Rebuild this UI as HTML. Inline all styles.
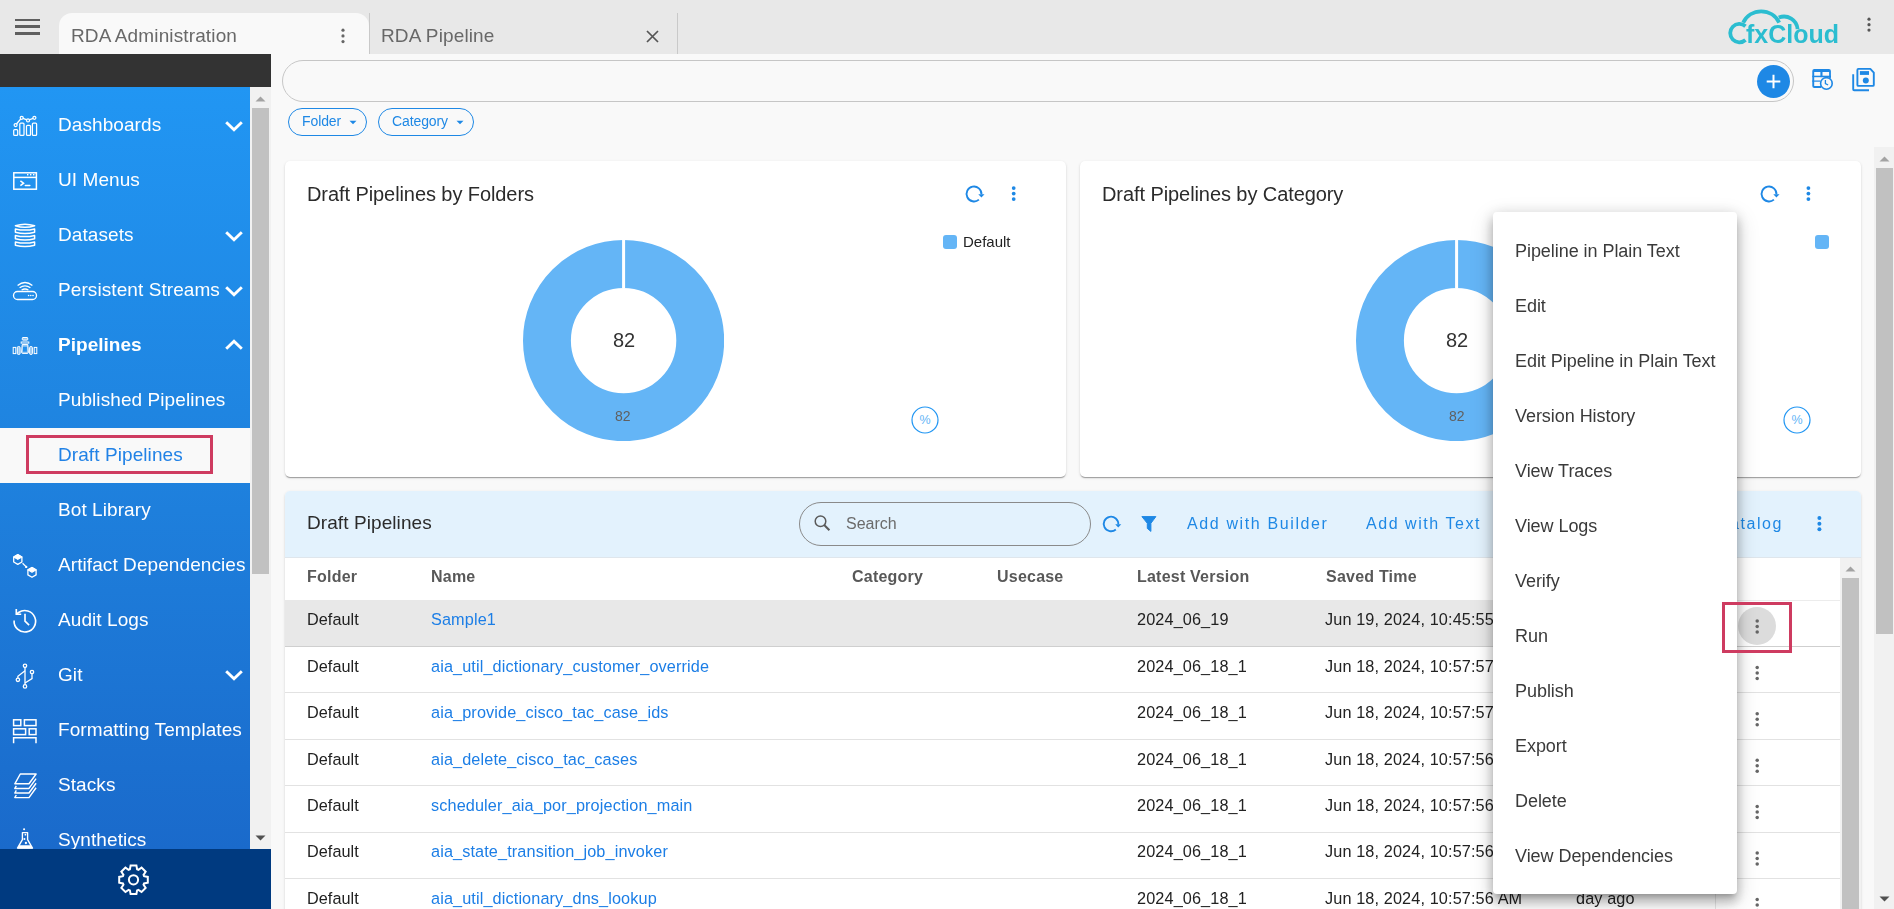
<!DOCTYPE html>
<html><head><meta charset="utf-8"><title>RDA Administration</title>
<style>
html,body{margin:0;padding:0;width:1894px;height:909px;overflow:hidden;background:#f9f9f9;font-family:"Liberation Sans", sans-serif;-webkit-font-smoothing:antialiased;}
.t{will-change:transform}
.t{position:absolute;white-space:nowrap;}
svg{display:block}
</style></head><body>
<div style="position:absolute;left:0.00px;top:0.00px;width:1894.00px;height:54.00px;background:#e8e8e8"></div>
<div style="position:absolute;left:271.00px;top:54.00px;width:1623.00px;height:855.00px;background:#f9f9f9"></div>
<div style="position:absolute;left:15.20px;top:18.60px;width:25.00px;height:2.60px;background:#5f5f5f"></div>
<div style="position:absolute;left:15.20px;top:25.40px;width:25.00px;height:2.60px;background:#5f5f5f"></div>
<div style="position:absolute;left:15.20px;top:32.20px;width:25.00px;height:2.60px;background:#5f5f5f"></div>
<div style="position:absolute;left:59.40px;top:12.80px;width:309.30px;height:41.20px;background:#f9f9f9;border-radius:13px 13px 0 0"></div>
<div class="t" style="left:71.30px;top:25.82px;font-size:19px;line-height:19px;color:#686868;font-weight:normal;letter-spacing:0.13px">RDA Administration</div>
<svg style="position:absolute;left:0;top:0;overflow:visible" width="1" height="1"><circle cx="343" cy="30.2" r="1.6" fill="#666"/><circle cx="343" cy="35.9" r="1.6" fill="#666"/><circle cx="343" cy="41.6" r="1.6" fill="#666"/></svg>
<div style="position:absolute;left:369.00px;top:13.00px;width:1.00px;height:41.00px;background:#c9c9c9"></div>
<div style="position:absolute;left:677.00px;top:13.00px;width:1.00px;height:41.00px;background:#c9c9c9"></div>
<div class="t" style="left:380.80px;top:25.82px;font-size:19px;line-height:19px;color:#686868;font-weight:normal;letter-spacing:0.13px">RDA Pipeline</div>
<svg style="position:absolute;left:646.00px;top:30.00px;" width="13" height="13" viewBox="0 0 13 13"><path d="M1 1L12 12M12 1L1 12" stroke="#555" stroke-width="1.7"/></svg>
<svg style="position:absolute;left:0;top:0;overflow:visible" width="1" height="1"><circle cx="1869" cy="19.2" r="1.6" fill="#555"/><circle cx="1869" cy="24.7" r="1.6" fill="#555"/><circle cx="1869" cy="30.1" r="1.6" fill="#555"/></svg>
<svg style="position:absolute;left:0;top:0;overflow:visible" width="1" height="1">
<path d="M1743.2 22.6 A 20 20 0 0 1 1779.2 22.6" fill="none" stroke="#2bbdd0" stroke-width="3.8"/>
<path d="M1778.8 17.6 A 13.6 13.6 0 0 1 1797.6 29.2" fill="none" stroke="#2bbdd0" stroke-width="3.8"/>
<path d="M1745.5 26.2 A 9.2 9.2 0 1 0 1745.5 40" fill="none" stroke="#2bbdd0" stroke-width="3.8"/>
<text x="1746" y="43.2" font-family="Liberation Sans" font-weight="bold" font-size="25.5" fill="#2bbdd0" textLength="93" lengthAdjust="spacingAndGlyphs">fxCloud</text>
</svg>
<div style="position:absolute;left:0.00px;top:54.00px;width:271.00px;height:33.00px;background:#333333"></div>
<div style="position:absolute;left:0.00px;top:87.00px;width:250.00px;height:762.00px;background:linear-gradient(180deg,#2196f3 0%,#1f84e0 45%,#1a6acb 100%)"></div>
<div style="position:absolute;left:250.00px;top:87.00px;width:21.00px;height:762.00px;background:#f1f1f1"></div>
<div style="position:absolute;left:252.00px;top:108.20px;width:17.00px;height:465.50px;background:#c1c1c1"></div>
<svg style="position:absolute;left:255.00px;top:95.00px;" width="11" height="7" viewBox="0 0 11 7"><path d="M0.5 6.5L5.5 1.5L10.5 6.5Z" fill="#a3a3a3"/></svg>
<svg style="position:absolute;left:255.00px;top:835.00px;" width="11" height="7" viewBox="0 0 11 7"><path d="M0.5 0.5L5.5 5.5L10.5 0.5Z" fill="#505050"/></svg>
<div style="position:absolute;left:0.00px;top:427.80px;width:250.00px;height:55.10px;background:#f9f9f9"></div>
<div style="position:absolute;left:26.10px;top:435.10px;width:186.80px;height:38.70px;border:3px solid #ce3b60;box-sizing:border-box"></div>
<div class="t" style="left:57.80px;top:115.42px;font-size:19px;line-height:19px;color:#fff;font-weight:normal;letter-spacing:0.08px">Dashboards</div>
<div class="t" style="left:57.80px;top:170.37px;font-size:19px;line-height:19px;color:#fff;font-weight:normal;letter-spacing:0.08px">UI Menus</div>
<div class="t" style="left:57.80px;top:225.32px;font-size:19px;line-height:19px;color:#fff;font-weight:normal;letter-spacing:0.08px">Datasets</div>
<div class="t" style="left:57.80px;top:280.27px;font-size:19px;line-height:19px;color:#fff;font-weight:normal;letter-spacing:0.08px">Persistent Streams</div>
<div class="t" style="left:57.90px;top:335.12px;font-size:19px;line-height:19px;color:#fff;font-weight:bold;letter-spacing:0.03px">Pipelines</div>
<div class="t" style="left:57.80px;top:390.17px;font-size:19px;line-height:19px;color:#fff;font-weight:normal;letter-spacing:0.08px">Published Pipelines</div>
<div class="t" style="left:57.80px;top:445.12px;font-size:19px;line-height:19px;color:#2182e6;font-weight:normal;letter-spacing:0.08px">Draft Pipelines</div>
<div class="t" style="left:57.80px;top:500.07px;font-size:19px;line-height:19px;color:#fff;font-weight:normal;letter-spacing:0.08px">Bot Library</div>
<div class="t" style="left:57.80px;top:555.02px;font-size:19px;line-height:19px;color:#fff;font-weight:normal;letter-spacing:0.08px">Artifact Dependencies</div>
<div class="t" style="left:57.80px;top:609.97px;font-size:19px;line-height:19px;color:#fff;font-weight:normal;letter-spacing:0.08px">Audit Logs</div>
<div class="t" style="left:57.80px;top:664.92px;font-size:19px;line-height:19px;color:#fff;font-weight:normal;letter-spacing:0.08px">Git</div>
<div class="t" style="left:57.80px;top:719.87px;font-size:19px;line-height:19px;color:#fff;font-weight:normal;letter-spacing:0.08px">Formatting Templates</div>
<div class="t" style="left:57.80px;top:774.82px;font-size:19px;line-height:19px;color:#fff;font-weight:normal;letter-spacing:0.08px">Stacks</div>
<div class="t" style="left:57.80px;top:829.77px;font-size:19px;line-height:19px;color:#fff;font-weight:normal;letter-spacing:0.08px">Synthetics</div>
<svg style="position:absolute;left:224.00px;top:118.90px;" width="20" height="14" viewBox="0 0 20 14"><path d="M2.2 3.2L10 10.8L17.8 3.2" fill="none" stroke="#fff" stroke-width="2.9"/></svg>
<svg style="position:absolute;left:224.00px;top:228.80px;" width="20" height="14" viewBox="0 0 20 14"><path d="M2.2 3.2L10 10.8L17.8 3.2" fill="none" stroke="#fff" stroke-width="2.9"/></svg>
<svg style="position:absolute;left:224.00px;top:283.75px;" width="20" height="14" viewBox="0 0 20 14"><path d="M2.2 3.2L10 10.8L17.8 3.2" fill="none" stroke="#fff" stroke-width="2.9"/></svg>
<svg style="position:absolute;left:224.00px;top:668.40px;" width="20" height="14" viewBox="0 0 20 14"><path d="M2.2 3.2L10 10.8L17.8 3.2" fill="none" stroke="#fff" stroke-width="2.9"/></svg>
<svg style="position:absolute;left:224.00px;top:338.20px;" width="20" height="14" viewBox="0 0 20 14"><path d="M2.2 10.8L10 3.2L17.8 10.8" fill="none" stroke="#fff" stroke-width="2.9"/></svg>
<div style="position:absolute;left:0.00px;top:848.80px;width:271.00px;height:61.00px;background:#003a80"></div>
<svg style="position:absolute;left:0;top:0;overflow:visible" width="1" height="1">
<g fill="none" stroke="#ffffff" stroke-width="1.25">
 <rect x="13.7" y="129.6" width="4" height="5.8" rx="1"/>
 <rect x="19.8" y="123.0" width="4.2" height="12.4" rx="1"/>
 <rect x="26.5" y="125.3" width="4" height="10.1" rx="1"/>
 <rect x="32.4" y="123.0" width="4.2" height="12.4" rx="1"/>
 <polyline points="15.6,125 21.7,117.8 28,120.4 34.4,117.8"/>
 <circle cx="15.6" cy="125" r="1.5" fill="#2196f3"/><circle cx="21.7" cy="117.8" r="1.5" fill="#2196f3"/>
 <circle cx="28" cy="120.4" r="1.5" fill="#2196f3"/><circle cx="34.4" cy="117.8" r="1.5" fill="#2196f3"/>
</g>
<g fill="none" stroke="#ffffff" stroke-width="1.5">
 <rect x="13.8" y="172.8" width="22.6" height="16.4"/>
 <line x1="13.8" y1="177.4" x2="36.4" y2="177.4"/>
 <polyline points="20.4,180.8 23.6,183.2 20.4,185.6" />
 <line x1="25.3" y1="185.6" x2="29.8" y2="185.6" stroke-linecap="round"/>
</g>
<g fill="#ffffff"><rect x="27" y="174" width="1.4" height="1.4"/><rect x="30" y="174" width="1.4" height="1.4"/><rect x="33" y="174" width="1.4" height="1.4"/></g>
<g fill="none" stroke="#ffffff" stroke-width="1.5" stroke-linejoin="round">
 <path d="M15.4 225.7 Q25 222.6 34.6 225.7 Q25 228.8 15.4 225.7 Z"/>
 <path d="M15.4 228.9 Q25 231.3 34.6 228.9 V232.3 Q25 234.7 15.4 232.3 Z"/>
 <path d="M15.4 235.4 Q25 237.8 34.6 235.4 V238.8 Q25 241.2 15.4 238.8 Z"/>
 <path d="M15.4 241.9 Q25 244.3 34.6 241.9 V245.3 Q25 247.7 15.4 245.3 Z"/>
</g>
<g fill="none" stroke="#ffffff" stroke-width="1.3">
 <rect x="13.5" y="291.5" width="23" height="8" rx="4"/>
 <path d="M17.6 285.5 Q25 279.5 32.4 285.5"/>
 <path d="M19.6 287.8 Q25 284 30.4 287.8"/>
 <path d="M21.6 290 Q25 288 28.4 290"/>
</g>
<g fill="#ffffff"><circle cx="28.6" cy="295.5" r="0.8"/><circle cx="30.8" cy="295.5" r="0.8"/><circle cx="33" cy="295.5" r="0.8"/></g>
<g stroke="#ffffff" stroke-width="1" fill="rgba(255,255,255,.5)">
 <rect x="22.3" y="337.5" width="5.4" height="2.6" rx="0.6"/>
 <rect x="21.4" y="341" width="7.2" height="3.2" rx="1" stroke="none"/>
 <path d="M21.2 341.5 v2.2 M28.8 341.5 v2.2" fill="none"/>
 <path d="M22.2 344.6 L21.6 352.2 Q21.6 353.4 22.8 353.4 L27.2 353.4 Q28.4 353.4 28.4 352.2 L27.8 344.6 Z"/>
 <rect x="23" y="346.8" width="3.9" height="4.9" fill="#2190ee" stroke="none"/>
 <rect x="17.3" y="346.5" width="2.8" height="8" rx="1.2"/>
 <rect x="29.6" y="346.5" width="2.8" height="8" rx="1.2"/>
 <rect x="13.2" y="347.4" width="2.6" height="6.2" fill="none"/>
 <rect x="34.2" y="347.4" width="2.6" height="6.2" fill="none"/>
</g>
<g transform="translate(0,0)">
 <path d="M17.8 554.6 L21.9 557 L21.9 562 L17.8 564.4 L13.7 562 L13.7 557 Z" fill="none" stroke="#ffffff" stroke-width="1.3" stroke-linejoin="round"/>
 <path d="M17.8 554.6 L21.9 557 L17.8 559.4 L13.7 557 Z" fill="#ffffff" stroke="#ffffff" stroke-width="1.1" stroke-linejoin="round"/>
</g><g transform="translate(14.2,12.9)">
 <path d="M17.8 554.6 L21.9 557 L21.9 562 L17.8 564.4 L13.7 562 L13.7 557 Z" fill="none" stroke="#ffffff" stroke-width="1.3" stroke-linejoin="round"/>
 <path d="M17.8 554.6 L21.9 557 L17.8 559.4 L13.7 557 Z" fill="#ffffff" stroke="#ffffff" stroke-width="1.1" stroke-linejoin="round"/>
</g>
<path d="M22.6 563.2 L26 566.6" stroke="#ffffff" stroke-width="1.3"/>
<circle cx="26.2" cy="566.9" r="1.2" fill="#ffffff"/>
<g fill="none" stroke="#ffffff" stroke-width="1.65">
 <path d="M14.1 620.5 A10.75 10.75 0 1 0 18.6 612.5 L16.3 614.2"/>
 <polyline points="16.3,609.1 16.3,614.2 21.2,614.2"/>
 <polyline points="25,613.7 25,621.2 29.1,625.1"/>
</g>
<g fill="none" stroke="#ffffff" stroke-width="1.3">
 <line x1="25" y1="667.5" x2="25" y2="684.7"/>
 <path d="M25 670.8 L17.9 676.3 L17.9 678.1"/>
 <path d="M25 683 L32 678.6 L32 673.7"/>
 <circle cx="25" cy="665.8" r="1.7"/><circle cx="25" cy="686.4" r="1.7"/>
 <circle cx="17.9" cy="679.8" r="1.7"/><circle cx="32" cy="672" r="1.7"/>
</g>
<g fill="none" stroke="#ffffff" stroke-width="1.5">
 <rect x="13.6" y="719.8" width="7.2" height="5.8"/>
 <rect x="24.4" y="719.8" width="11.6" height="5.8"/>
 <rect x="13.6" y="728.8" width="12" height="5.8"/>
 <rect x="29.2" y="728.8" width="6.8" height="5.8"/>
 <polyline points="13.6,743.3 13.6,737.8 36,737.8 36,743.3"/>
</g>
<g fill="none" stroke="#ffffff" stroke-width="1.45" stroke-linejoin="round">
 <path d="M20.3 774 L36.1 774 L29 783.8 L14.8 783.8 Z"/>
 <path d="M36.1 778.6 L29 788.4 L14.8 788.4 L16.3 785.8"/>
 <path d="M36.1 783.2 L29 793 L14.8 793 L16.3 790.4"/>
 <path d="M36.1 787.8 L29 797.6 L14.8 797.6 L16.3 795"/>
</g>
<path d="M22.4 832.6 H27.6 V839.6 L32.5 848.1 H17.5 L22.4 839.6 Z" fill="none" stroke="#ffffff" stroke-width="1.35" stroke-linejoin="round"/>
<path d="M19.2 845.3 H30.8 L32.5 848.4 H17.5 Z" fill="#ffffff"/>
<circle cx="24.1" cy="829.3" r="1.05" fill="#ffffff"/>
<circle cx="25.4" cy="834.7" r="0.85" fill="#ffffff"/><circle cx="24.4" cy="839" r="1.05" fill="#ffffff"/><circle cx="25.9" cy="843" r="1.15" fill="#ffffff"/>
</svg>
<svg style="position:absolute;left:0;top:0;overflow:visible" width="1" height="1"><path fill="none" stroke="#fff" stroke-width="2" stroke-linejoin="miter" d="M129.90 869.20 L130.60 865.50 L136.40 865.50 L137.10 869.20 A10.6 10.6 0 0 1 138.45 869.76 L141.56 867.64 L145.66 871.74 L143.54 874.85 A10.6 10.6 0 0 1 144.10 876.20 L147.80 876.90 L147.80 882.70 L144.10 883.40 A10.6 10.6 0 0 1 143.54 884.75 L145.66 887.86 L141.56 891.96 L138.45 889.84 A10.6 10.6 0 0 1 137.10 890.40 L136.40 894.10 L130.60 894.10 L129.90 890.40 A10.6 10.6 0 0 1 128.55 889.84 L125.44 891.96 L121.34 887.86 L123.46 884.75 A10.6 10.6 0 0 1 122.90 883.40 L119.20 882.70 L119.20 876.90 L122.90 876.20 A10.6 10.6 0 0 1 123.46 874.85 L121.34 871.74 L125.44 867.64 L128.55 869.76 A10.6 10.6 0 0 1 129.90 869.20 Z"/><circle cx="133.5" cy="879.8" r="4.6" fill="none" stroke="#fff" stroke-width="2"/></svg>
<div style="position:absolute;left:282.20px;top:60.00px;width:1512.20px;height:42.30px;border:1px solid #c6c6c6;border-radius:22px;box-sizing:border-box;background:#f9f9f9"></div>
<svg style="position:absolute;left:1757.00px;top:65.00px;" width="33" height="33" viewBox="0 0 33 33"><circle cx="16.5" cy="16.5" r="16.5" fill="#1e88e5"/><path d="M16.5 9.7V23.3M9.7 16.5H23.3" stroke="#fff" stroke-width="2"/></svg>
<svg style="position:absolute;left:0;top:0;overflow:visible" width="1" height="1">
<path d="M1814.3 69.1 H1828.9 Q1830.9 69.1 1830.9 71.1 V78.5 H1829.1 V72.1 H1814.2 V85.9 H1821 V87.9 H1814.3 Q1812.3 87.9 1812.3 85.9 V71.1 Q1812.3 69.1 1814.3 69.1 Z" fill="#1e88e5"/>
<rect x="1812.3" y="75.7" width="18.6" height="1.5" fill="#1e88e5"/>
<rect x="1820.4" y="69.1" width="2.1" height="8" fill="#1e88e5"/>
<rect x="1812.3" y="80.5" width="8" height="1.2" fill="#1e88e5"/>
<circle cx="1826.4" cy="83.4" r="5.8" fill="#f9f9f9" stroke="#1e88e5" stroke-width="1.6"/>
<path d="M1825.4 80.1 V83.5 L1828.1 85" fill="none" stroke="#1e88e5" stroke-width="1.3"/>
</svg>
<svg style="position:absolute;left:0;top:0;overflow:visible" width="1" height="1">
<path d="M1858.4 68.9 H1870.3 L1873.8 72.6 V84.9 Q1873.8 85.9 1872.8 85.9 H1858.4 Q1857.4 85.9 1857.4 84.9 V69.9 Q1857.4 68.9 1858.4 68.9 Z" fill="none" stroke="#1e88e5" stroke-width="1.9" stroke-linejoin="round"/>
<path d="M1853.2 74.3 V89.3 Q1853.2 90.2 1854.1 90.2 H1869" fill="none" stroke="#1e88e5" stroke-width="1.9"/>
<rect x="1859.9" y="71.1" width="9.1" height="3.8" fill="#1e88e5"/>
<circle cx="1865.8" cy="80.4" r="3" fill="#1e88e5"/>
</svg>
<div style="position:absolute;left:287.90px;top:107.90px;width:78.90px;height:27.80px;border:1.2px solid #1e88e5;border-radius:14px;box-sizing:border-box"></div>
<div class="t" style="left:302.40px;top:114.15px;font-size:14px;line-height:14px;color:#1e88e5;font-weight:normal;letter-spacing:-0.1px">Folder</div>
<svg style="position:absolute;left:348.60px;top:119.50px;" width="8" height="5" viewBox="0 0 8 5"><path d="M0.5 0.8H7.5L4 4.3Z" fill="#1e88e5"/></svg>
<div style="position:absolute;left:378.00px;top:107.90px;width:96.00px;height:27.80px;border:1.2px solid #1e88e5;border-radius:14px;box-sizing:border-box"></div>
<div class="t" style="left:392.40px;top:114.15px;font-size:14px;line-height:14px;color:#1e88e5;font-weight:normal;letter-spacing:-0.1px">Category</div>
<svg style="position:absolute;left:455.60px;top:119.50px;" width="8" height="5" viewBox="0 0 8 5"><path d="M0.5 0.8H7.5L4 4.3Z" fill="#1e88e5"/></svg>
<div style="position:absolute;left:1874.00px;top:147.00px;width:20.00px;height:762.00px;background:#f1f1f1"></div>
<div style="position:absolute;left:1876.00px;top:168.00px;width:17.00px;height:465.60px;background:#c1c1c1"></div>
<svg style="position:absolute;left:1879.00px;top:155.00px;" width="11" height="7" viewBox="0 0 11 7"><path d="M0.5 6.5L5.5 1.5L10.5 6.5Z" fill="#a3a3a3"/></svg>
<svg style="position:absolute;left:1879.00px;top:896.00px;" width="11" height="7" viewBox="0 0 11 7"><path d="M0.5 0.5L5.5 5.5L10.5 0.5Z" fill="#505050"/></svg>
<div style="position:absolute;left:285.00px;top:160.90px;width:781.00px;height:316.30px;background:#fff;border-radius:5px;box-shadow:0 2px 1px -1px rgba(0,0,0,.2),0 1px 1px 0 rgba(0,0,0,.14),0 1px 3px 0 rgba(0,0,0,.12)"></div>
<div class="t" style="left:306.80px;top:183.67px;font-size:20px;line-height:20px;color:#2b2b2b;font-weight:normal;letter-spacing:-0.08px">Draft Pipelines by Folders</div>
<svg style="position:absolute;left:963.20px;top:182.60px;transform:scale(1.0);transform-origin:11px 11px" width="22" height="22" viewBox="0 0 22 22"><path d="M18.45 11.4 A 7.45 7.45 0 1 0 15.9 16.6" fill="none" stroke="#1e88e5" stroke-width="1.9"/><path d="M15.3 11.3 L21.5 11.3 L18.4 14.6 Z" fill="#1e88e5"/></svg>
<svg style="position:absolute;left:0;top:0;overflow:visible" width="1" height="1"><circle cx="1013.7" cy="188.1" r="1.9" fill="#1e88e5"/><circle cx="1013.7" cy="193.6" r="1.9" fill="#1e88e5"/><circle cx="1013.7" cy="199.1" r="1.9" fill="#1e88e5"/></svg>
<div style="position:absolute;left:943.00px;top:235.00px;width:14.00px;height:14.00px;background:#64b5f6;border-radius:3px"></div>
<div class="t" style="left:963.40px;top:234.30px;font-size:15px;line-height:15px;color:#222;font-weight:normal;">Default</div>
<svg style="position:absolute;left:522.70px;top:240.20px;" width="201.2" height="201.2" viewBox="0 0 201.2 201.2"><circle cx="100.6" cy="100.6" r="76.65" fill="none" stroke="#64b5f6" stroke-width="47.89999999999999"/><rect x="99.1" y="0" width="3" height="48.39999999999999" fill="#fff"/></svg>
<div class="t" style="left:613.00px;top:330.47px;font-size:20px;line-height:20px;color:#333;font-weight:normal;">82</div>
<div class="t" style="left:615.40px;top:409.45px;font-size:14px;line-height:14px;color:#606060;font-weight:normal;">82</div>
<svg style="position:absolute;left:911.40px;top:406.30px;" width="28" height="28" viewBox="0 0 28 28"><circle cx="14" cy="14" r="13" fill="none" stroke="#2196f3" stroke-width="1.2"/><text x="14" y="18.3" text-anchor="middle" font-family="Liberation Sans" font-size="12.5" fill="#64b5f6">%</text></svg>
<div style="position:absolute;left:1080.00px;top:160.90px;width:781.00px;height:316.30px;background:#fff;border-radius:5px;box-shadow:0 2px 1px -1px rgba(0,0,0,.2),0 1px 1px 0 rgba(0,0,0,.14),0 1px 3px 0 rgba(0,0,0,.12)"></div>
<div class="t" style="left:1101.80px;top:183.67px;font-size:20px;line-height:20px;color:#2b2b2b;font-weight:normal;letter-spacing:-0.08px">Draft Pipelines by Category</div>
<svg style="position:absolute;left:1758.20px;top:182.60px;transform:scale(1.0);transform-origin:11px 11px" width="22" height="22" viewBox="0 0 22 22"><path d="M18.45 11.4 A 7.45 7.45 0 1 0 15.9 16.6" fill="none" stroke="#1e88e5" stroke-width="1.9"/><path d="M15.3 11.3 L21.5 11.3 L18.4 14.6 Z" fill="#1e88e5"/></svg>
<svg style="position:absolute;left:0;top:0;overflow:visible" width="1" height="1"><circle cx="1808.4" cy="188.1" r="1.9" fill="#1e88e5"/><circle cx="1808.4" cy="193.6" r="1.9" fill="#1e88e5"/><circle cx="1808.4" cy="199.1" r="1.9" fill="#1e88e5"/></svg>
<div style="position:absolute;left:1815.00px;top:235.00px;width:14.00px;height:14.00px;background:#64b5f6;border-radius:3px"></div>
<svg style="position:absolute;left:1355.90px;top:240.20px;" width="201.2" height="201.2" viewBox="0 0 201.2 201.2"><circle cx="100.6" cy="100.6" r="76.65" fill="none" stroke="#64b5f6" stroke-width="47.89999999999999"/><rect x="99.1" y="0" width="3" height="48.39999999999999" fill="#fff"/></svg>
<div class="t" style="left:1446.20px;top:330.47px;font-size:20px;line-height:20px;color:#333;font-weight:normal;">82</div>
<div class="t" style="left:1448.60px;top:409.45px;font-size:14px;line-height:14px;color:#606060;font-weight:normal;">82</div>
<svg style="position:absolute;left:1783.40px;top:406.30px;" width="28" height="28" viewBox="0 0 28 28"><circle cx="14" cy="14" r="13" fill="none" stroke="#2196f3" stroke-width="1.2"/><text x="14" y="18.3" text-anchor="middle" font-family="Liberation Sans" font-size="12.5" fill="#64b5f6">%</text></svg>
<div style="position:absolute;left:285.00px;top:490.90px;width:1576.00px;height:460.00px;background:#fff;border-radius:5px;box-shadow:0 2px 1px -1px rgba(0,0,0,.2),0 1px 1px 0 rgba(0,0,0,.14),0 1px 3px 0 rgba(0,0,0,.12)"></div>
<div style="position:absolute;left:285.00px;top:490.90px;width:1576.00px;height:66.30px;background:#e3f2fd;border-radius:5px 5px 0 0;border-bottom:1px solid #dfe6ec;box-sizing:content-box"></div>
<div class="t" style="left:306.90px;top:513.12px;font-size:19px;line-height:19px;color:#2b2b2b;font-weight:normal;letter-spacing:0.08px">Draft Pipelines</div>
<div style="position:absolute;left:799.10px;top:501.90px;width:291.80px;height:43.70px;border:1.2px solid #8a8a8a;border-radius:22px;box-sizing:border-box"></div>
<svg style="position:absolute;left:812.00px;top:514.00px;" width="20" height="20" viewBox="0 0 20 20"><circle cx="8.5" cy="7.2" r="5.3" fill="none" stroke="#5a5a5a" stroke-width="1.5"/><path d="M12.2 11L17.4 16.2" stroke="#5a5a5a" stroke-width="2"/></svg>
<div class="t" style="left:845.50px;top:516.16px;font-size:16px;line-height:16px;color:#6b6b6b;font-weight:normal;">Search</div>
<svg style="position:absolute;left:1099.50px;top:513.00px;transform:scale(0.98);transform-origin:11px 11px" width="22" height="22" viewBox="0 0 22 22"><path d="M18.45 11.4 A 7.45 7.45 0 1 0 15.9 16.6" fill="none" stroke="#1e88e5" stroke-width="1.9"/><path d="M15.3 11.3 L21.5 11.3 L18.4 14.6 Z" fill="#1e88e5"/></svg>
<svg style="position:absolute;left:1140.00px;top:515.00px;" width="18" height="18" viewBox="0 0 18 18"><path d="M1.9 1.6H15.9L10.9 8.3V16.4L7.3 13.4V8.3Z" fill="#1e88e5" stroke="#1e88e5" stroke-width="1" stroke-linejoin="round"/></svg>
<div class="t" style="left:1187.10px;top:516.26px;font-size:16px;line-height:16px;color:#1e88e5;font-weight:normal;letter-spacing:1.62px">Add with Builder</div>
<div class="t" style="left:1365.50px;top:516.26px;font-size:16px;line-height:16px;color:#1e88e5;font-weight:normal;letter-spacing:1.55px">Add with Text</div>
<div class="t" style="right:110.90px;top:516.26px;font-size:16px;line-height:16px;color:#1e88e5;letter-spacing:1.6px">Add from Catalog</div>
<svg style="position:absolute;left:0;top:0;overflow:visible" width="1" height="1"><circle cx="1819.4" cy="518.1" r="2.0" fill="#1e88e5"/><circle cx="1819.4" cy="523.7" r="2.0" fill="#1e88e5"/><circle cx="1819.4" cy="529.2" r="2.0" fill="#1e88e5"/></svg>
<div class="t" style="left:307.40px;top:568.86px;font-size:16px;line-height:16px;color:#585858;font-weight:bold;letter-spacing:0.22px">Folder</div>
<div class="t" style="left:431.00px;top:568.86px;font-size:16px;line-height:16px;color:#585858;font-weight:bold;letter-spacing:0.22px">Name</div>
<div class="t" style="left:851.90px;top:568.86px;font-size:16px;line-height:16px;color:#585858;font-weight:bold;letter-spacing:0.22px">Category</div>
<div class="t" style="left:997.00px;top:568.86px;font-size:16px;line-height:16px;color:#585858;font-weight:bold;letter-spacing:0.22px">Usecase</div>
<div class="t" style="left:1137.20px;top:568.86px;font-size:16px;line-height:16px;color:#585858;font-weight:bold;letter-spacing:0.22px">Latest Version</div>
<div class="t" style="left:1326.30px;top:568.86px;font-size:16px;line-height:16px;color:#585858;font-weight:bold;letter-spacing:0.22px">Saved Time</div>
<div class="t" style="left:1576.00px;top:568.86px;font-size:16px;line-height:16px;color:#585858;font-weight:bold;letter-spacing:0.22px">Modified</div>
<div style="position:absolute;left:285.00px;top:599.60px;width:1555.00px;height:1.00px;background:#ececec"></div>
<div style="position:absolute;left:285.00px;top:600.00px;width:1431.00px;height:46.40px;background:#e8e8e8"></div>
<div style="position:absolute;left:285.00px;top:645.80px;width:1555.00px;height:1.20px;background:#cfcfcf"></div>
<div class="t" style="left:307.40px;top:611.34px;font-size:16.25px;line-height:16.25px;color:#222;font-weight:normal;letter-spacing:0.05px">Default</div>
<div class="t" style="left:430.80px;top:611.34px;font-size:16.25px;line-height:16.25px;color:#1c7ee6;font-weight:normal;letter-spacing:0.12px">Sample1</div>
<div class="t" style="left:1137.00px;top:611.34px;font-size:16.25px;line-height:16.25px;color:#222;font-weight:normal;letter-spacing:0.12px">2024_06_19</div>
<div class="t" style="left:1325.30px;top:611.34px;font-size:16.25px;line-height:16.25px;color:#222;font-weight:normal;letter-spacing:0.12px">Jun 19, 2024, 10:45:55 AM</div>
<div class="t" style="left:1575.60px;top:611.34px;font-size:16.25px;line-height:16.25px;color:#222;font-weight:normal;letter-spacing:0.12px">day ago</div>
<div style="position:absolute;left:285.00px;top:692.30px;width:1555.00px;height:1.00px;background:#e2e2e2"></div>
<div class="t" style="left:307.40px;top:657.74px;font-size:16.25px;line-height:16.25px;color:#222;font-weight:normal;letter-spacing:0.05px">Default</div>
<div class="t" style="left:430.80px;top:657.74px;font-size:16.25px;line-height:16.25px;color:#1c7ee6;font-weight:normal;letter-spacing:0.12px">aia_util_dictionary_customer_override</div>
<div class="t" style="left:1137.00px;top:657.74px;font-size:16.25px;line-height:16.25px;color:#222;font-weight:normal;letter-spacing:0.12px">2024_06_18_1</div>
<div class="t" style="left:1325.30px;top:657.74px;font-size:16.25px;line-height:16.25px;color:#222;font-weight:normal;letter-spacing:0.12px">Jun 18, 2024, 10:57:57 AM</div>
<div class="t" style="left:1575.60px;top:657.74px;font-size:16.25px;line-height:16.25px;color:#222;font-weight:normal;letter-spacing:0.12px">day ago</div>
<div style="position:absolute;left:285.00px;top:738.70px;width:1555.00px;height:1.00px;background:#e2e2e2"></div>
<div class="t" style="left:307.40px;top:704.14px;font-size:16.25px;line-height:16.25px;color:#222;font-weight:normal;letter-spacing:0.05px">Default</div>
<div class="t" style="left:430.80px;top:704.14px;font-size:16.25px;line-height:16.25px;color:#1c7ee6;font-weight:normal;letter-spacing:0.12px">aia_provide_cisco_tac_case_ids</div>
<div class="t" style="left:1137.00px;top:704.14px;font-size:16.25px;line-height:16.25px;color:#222;font-weight:normal;letter-spacing:0.12px">2024_06_18_1</div>
<div class="t" style="left:1325.30px;top:704.14px;font-size:16.25px;line-height:16.25px;color:#222;font-weight:normal;letter-spacing:0.12px">Jun 18, 2024, 10:57:57 AM</div>
<div class="t" style="left:1575.60px;top:704.14px;font-size:16.25px;line-height:16.25px;color:#222;font-weight:normal;letter-spacing:0.12px">day ago</div>
<div style="position:absolute;left:285.00px;top:785.10px;width:1555.00px;height:1.00px;background:#e2e2e2"></div>
<div class="t" style="left:307.40px;top:750.54px;font-size:16.25px;line-height:16.25px;color:#222;font-weight:normal;letter-spacing:0.05px">Default</div>
<div class="t" style="left:430.80px;top:750.54px;font-size:16.25px;line-height:16.25px;color:#1c7ee6;font-weight:normal;letter-spacing:0.12px">aia_delete_cisco_tac_cases</div>
<div class="t" style="left:1137.00px;top:750.54px;font-size:16.25px;line-height:16.25px;color:#222;font-weight:normal;letter-spacing:0.12px">2024_06_18_1</div>
<div class="t" style="left:1325.30px;top:750.54px;font-size:16.25px;line-height:16.25px;color:#222;font-weight:normal;letter-spacing:0.12px">Jun 18, 2024, 10:57:56 AM</div>
<div class="t" style="left:1575.60px;top:750.54px;font-size:16.25px;line-height:16.25px;color:#222;font-weight:normal;letter-spacing:0.12px">day ago</div>
<div style="position:absolute;left:285.00px;top:831.50px;width:1555.00px;height:1.00px;background:#e2e2e2"></div>
<div class="t" style="left:307.40px;top:796.94px;font-size:16.25px;line-height:16.25px;color:#222;font-weight:normal;letter-spacing:0.05px">Default</div>
<div class="t" style="left:430.80px;top:796.94px;font-size:16.25px;line-height:16.25px;color:#1c7ee6;font-weight:normal;letter-spacing:0.12px">scheduler_aia_por_projection_main</div>
<div class="t" style="left:1137.00px;top:796.94px;font-size:16.25px;line-height:16.25px;color:#222;font-weight:normal;letter-spacing:0.12px">2024_06_18_1</div>
<div class="t" style="left:1325.30px;top:796.94px;font-size:16.25px;line-height:16.25px;color:#222;font-weight:normal;letter-spacing:0.12px">Jun 18, 2024, 10:57:56 AM</div>
<div class="t" style="left:1575.60px;top:796.94px;font-size:16.25px;line-height:16.25px;color:#222;font-weight:normal;letter-spacing:0.12px">day ago</div>
<div style="position:absolute;left:285.00px;top:877.90px;width:1555.00px;height:1.00px;background:#e2e2e2"></div>
<div class="t" style="left:307.40px;top:843.34px;font-size:16.25px;line-height:16.25px;color:#222;font-weight:normal;letter-spacing:0.05px">Default</div>
<div class="t" style="left:430.80px;top:843.34px;font-size:16.25px;line-height:16.25px;color:#1c7ee6;font-weight:normal;letter-spacing:0.12px">aia_state_transition_job_invoker</div>
<div class="t" style="left:1137.00px;top:843.34px;font-size:16.25px;line-height:16.25px;color:#222;font-weight:normal;letter-spacing:0.12px">2024_06_18_1</div>
<div class="t" style="left:1325.30px;top:843.34px;font-size:16.25px;line-height:16.25px;color:#222;font-weight:normal;letter-spacing:0.12px">Jun 18, 2024, 10:57:56 AM</div>
<div class="t" style="left:1575.60px;top:843.34px;font-size:16.25px;line-height:16.25px;color:#222;font-weight:normal;letter-spacing:0.12px">day ago</div>
<div style="position:absolute;left:285.00px;top:924.30px;width:1555.00px;height:1.00px;background:#e2e2e2"></div>
<div class="t" style="left:307.40px;top:889.74px;font-size:16.25px;line-height:16.25px;color:#222;font-weight:normal;letter-spacing:0.05px">Default</div>
<div class="t" style="left:430.80px;top:889.74px;font-size:16.25px;line-height:16.25px;color:#1c7ee6;font-weight:normal;letter-spacing:0.12px">aia_util_dictionary_dns_lookup</div>
<div class="t" style="left:1137.00px;top:889.74px;font-size:16.25px;line-height:16.25px;color:#222;font-weight:normal;letter-spacing:0.12px">2024_06_18_1</div>
<div class="t" style="left:1325.30px;top:889.74px;font-size:16.25px;line-height:16.25px;color:#222;font-weight:normal;letter-spacing:0.12px">Jun 18, 2024, 10:57:56 AM</div>
<div class="t" style="left:1575.60px;top:889.74px;font-size:16.25px;line-height:16.25px;color:#222;font-weight:normal;letter-spacing:0.12px">day ago</div>
<div style="position:absolute;left:1715.30px;top:558.00px;width:1.00px;height:351.00px;background:#e6e6e6"></div>
<svg style="position:absolute;left:0;top:0;overflow:visible" width="1" height="1"><circle cx="1757.2" cy="621.0" r="1.75" fill="#666"/><circle cx="1757.2" cy="626.5" r="1.75" fill="#666"/><circle cx="1757.2" cy="632.0" r="1.75" fill="#666"/></svg>
<svg style="position:absolute;left:0;top:0;overflow:visible" width="1" height="1"><circle cx="1757.2" cy="667.4" r="1.75" fill="#666"/><circle cx="1757.2" cy="672.9" r="1.75" fill="#666"/><circle cx="1757.2" cy="678.4" r="1.75" fill="#666"/></svg>
<svg style="position:absolute;left:0;top:0;overflow:visible" width="1" height="1"><circle cx="1757.2" cy="713.8" r="1.75" fill="#666"/><circle cx="1757.2" cy="719.3" r="1.75" fill="#666"/><circle cx="1757.2" cy="724.8" r="1.75" fill="#666"/></svg>
<svg style="position:absolute;left:0;top:0;overflow:visible" width="1" height="1"><circle cx="1757.2" cy="760.2" r="1.75" fill="#666"/><circle cx="1757.2" cy="765.7" r="1.75" fill="#666"/><circle cx="1757.2" cy="771.2" r="1.75" fill="#666"/></svg>
<svg style="position:absolute;left:0;top:0;overflow:visible" width="1" height="1"><circle cx="1757.2" cy="806.6" r="1.75" fill="#666"/><circle cx="1757.2" cy="812.1" r="1.75" fill="#666"/><circle cx="1757.2" cy="817.6" r="1.75" fill="#666"/></svg>
<svg style="position:absolute;left:0;top:0;overflow:visible" width="1" height="1"><circle cx="1757.2" cy="853.0" r="1.75" fill="#666"/><circle cx="1757.2" cy="858.5" r="1.75" fill="#666"/><circle cx="1757.2" cy="864.0" r="1.75" fill="#666"/></svg>
<svg style="position:absolute;left:0;top:0;overflow:visible" width="1" height="1"><circle cx="1757.2" cy="899.4" r="1.75" fill="#666"/><circle cx="1757.2" cy="904.9" r="1.75" fill="#666"/><circle cx="1757.2" cy="910.4" r="1.75" fill="#666"/></svg>
<div style="position:absolute;left:1840.00px;top:558.00px;width:21.00px;height:351.00px;background:#f1f1f1"></div>
<div style="position:absolute;left:1842.00px;top:578.00px;width:17.00px;height:331.00px;background:#c1c1c1"></div>
<svg style="position:absolute;left:1845.00px;top:565.00px;" width="11" height="7" viewBox="0 0 11 7"><path d="M0.5 6.5L5.5 1.5L10.5 6.5Z" fill="#a3a3a3"/></svg>
<div style="position:absolute;left:1738.00px;top:607.20px;width:38.00px;height:38.00px;background:#dcdcdc;border-radius:50%"></div>
<svg style="position:absolute;left:0;top:0;overflow:visible" width="1" height="1"><circle cx="1757.2" cy="621.1" r="1.75" fill="#666"/><circle cx="1757.2" cy="626.6" r="1.75" fill="#666"/><circle cx="1757.2" cy="632.1" r="1.75" fill="#666"/></svg>
<div style="position:absolute;left:1493.00px;top:211.90px;width:244.00px;height:681.90px;background:#fff;border-radius:4px;box-shadow:0 5px 5px -3px rgba(0,0,0,.2),0 8px 10px 1px rgba(0,0,0,.14),0 3px 14px 2px rgba(0,0,0,.12),0 8px 22px 3px rgba(0,0,0,.12)"></div>
<div class="t" style="left:1515.20px;top:241.96px;font-size:18px;line-height:18px;color:#3a3a3a;font-weight:normal;letter-spacing:-0.05px">Pipeline in Plain Text</div>
<div class="t" style="left:1515.20px;top:296.94px;font-size:18px;line-height:18px;color:#3a3a3a;font-weight:normal;letter-spacing:-0.05px">Edit</div>
<div class="t" style="left:1515.20px;top:351.92px;font-size:18px;line-height:18px;color:#3a3a3a;font-weight:normal;letter-spacing:-0.05px">Edit Pipeline in Plain Text</div>
<div class="t" style="left:1515.20px;top:406.90px;font-size:18px;line-height:18px;color:#3a3a3a;font-weight:normal;letter-spacing:-0.05px">Version History</div>
<div class="t" style="left:1515.20px;top:461.88px;font-size:18px;line-height:18px;color:#3a3a3a;font-weight:normal;letter-spacing:-0.05px">View Traces</div>
<div class="t" style="left:1515.20px;top:516.86px;font-size:18px;line-height:18px;color:#3a3a3a;font-weight:normal;letter-spacing:-0.05px">View Logs</div>
<div class="t" style="left:1515.20px;top:571.84px;font-size:18px;line-height:18px;color:#3a3a3a;font-weight:normal;letter-spacing:-0.05px">Verify</div>
<div class="t" style="left:1515.20px;top:626.82px;font-size:18px;line-height:18px;color:#3a3a3a;font-weight:normal;letter-spacing:-0.05px">Run</div>
<div class="t" style="left:1515.20px;top:681.80px;font-size:18px;line-height:18px;color:#3a3a3a;font-weight:normal;letter-spacing:-0.05px">Publish</div>
<div class="t" style="left:1515.20px;top:736.78px;font-size:18px;line-height:18px;color:#3a3a3a;font-weight:normal;letter-spacing:-0.05px">Export</div>
<div class="t" style="left:1515.20px;top:791.76px;font-size:18px;line-height:18px;color:#3a3a3a;font-weight:normal;letter-spacing:-0.05px">Delete</div>
<div class="t" style="left:1515.20px;top:846.74px;font-size:18px;line-height:18px;color:#3a3a3a;font-weight:normal;letter-spacing:-0.05px">View Dependencies</div>
<div style="position:absolute;left:1722.00px;top:601.90px;width:69.60px;height:50.80px;border:3px solid #ce3b60;box-sizing:border-box"></div>
</body></html>
